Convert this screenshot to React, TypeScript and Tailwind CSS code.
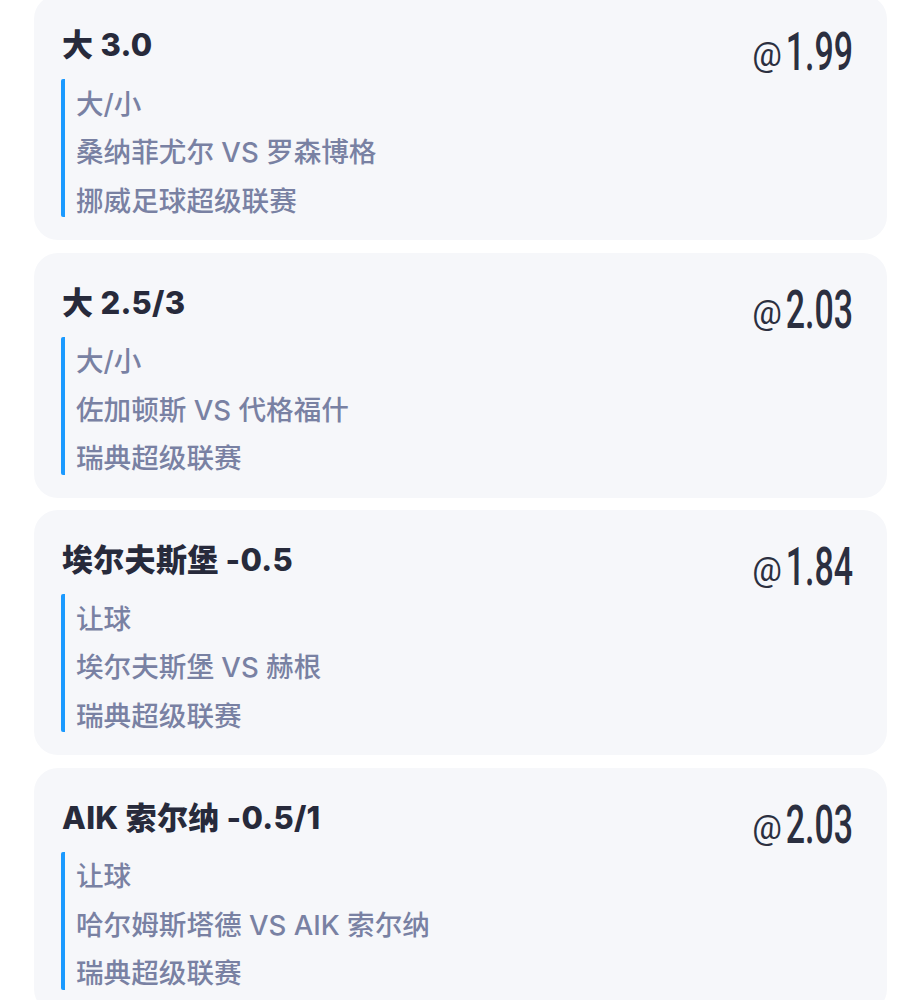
import React from "react";

type Bet = {
  title: string;
  odds: string;
  market: string;
  match: string;
  league: string;
};

const bets: Bet[] = [
  { title: "大 3.0", odds: "1.99", market: "大/小", match: "桑纳菲尤尔 VS 罗森博格", league: "挪威足球超级联赛" },
  { title: "大 2.5/3", odds: "2.03", market: "大/小", match: "佐加顿斯 VS 代格福什", league: "瑞典超级联赛" },
  { title: "埃尔夫斯堡 -0.5", odds: "1.84", market: "让球", match: "埃尔夫斯堡 VS 赫根", league: "瑞典超级联赛" },
  { title: "AIK 索尔纳 -0.5/1", odds: "2.03", market: "让球", match: "哈尔姆斯塔德 VS AIK 索尔纳", league: "瑞典超级联赛" },
];

function Card({ bet }: { bet: Bet }) {
  return (
    <div className="h-[245px] shrink-0 rounded-[24px] bg-[#f6f7fa] pl-[27px] pr-[34px] pt-[30px] flex justify-between">
      <div className="flex flex-col">
        <div
          className="text-[31px] leading-[40px] font-extrabold text-[#272a3b] pl-[1px] tracking-[0.3px]"
          style={{ fontFamily: 'Inter, "Noto Sans CJK SC", sans-serif' }}
        >
          {bet.title}
        </div>
        <div
          className="mt-[14px] border-l-[4px] border-[#1b9aff] rounded-[2px] pl-[11px] pt-[4.5px] flex flex-col gap-[8.5px] text-[27.6px] leading-[40px] font-medium text-[#7981a3]"
          style={{ fontFamily: 'Inter, "Noto Sans CJK SC", sans-serif' }}
        >
          <div>{bet.market}</div>
          <div>{bet.match}</div>
          <div className="h-[36.5px]">{bet.league}</div>
        </div>
      </div>
      <div className="flex items-center h-[54px] text-[#2b2f40]">
        <span
          className="text-[33px] leading-[40px] mr-[4px] mt-[6px]"
          style={{ fontFamily: 'Roboto, "Liberation Sans", sans-serif' }}
        >
          @
        </span>
        <span className="w-[67px] flex justify-end">
          <span
            className="origin-right scale-x-[0.64] whitespace-nowrap text-[53px] leading-[54px] font-medium"
            style={{ fontFamily: 'Roboto, "Liberation Sans", sans-serif' }}
          >
            {bet.odds}
          </span>
        </span>
      </div>
    </div>
  );
}

export default function App() {
  return (
    <div className="bg-white min-h-screen w-[921px] overflow-hidden">
      <div className="px-[34px] flex flex-col gap-[12.5px] mt-[-5px]">
        {bets.map((b, i) => (
          <Card key={i} bet={b} />
        ))}
      </div>
    </div>
  );
}
